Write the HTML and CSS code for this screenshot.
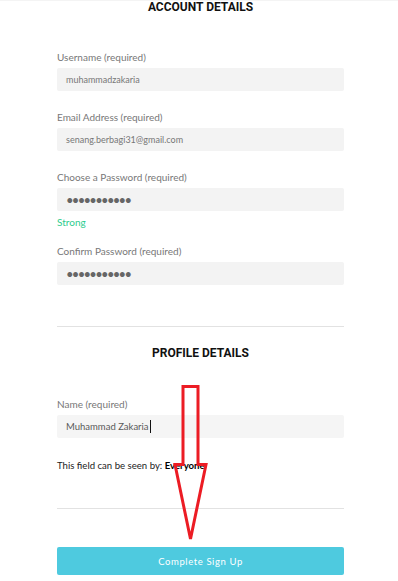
FILE: index.html
```html
<!DOCTYPE html>
<html lang="en">
<head>
<meta charset="utf-8">
<title>Sign Up</title>
<link rel="stylesheet" href="styles.css">
</head>
<body>
<div class="page">
  <form class="signup">
    <h2 class="section-title">ACCOUNT DETAILS</h2>

    <div class="field first">
      <label class="label">Username (required)</label>
      <div class="input">muhammadzakaria</div>
    </div>

    <div class="field">
      <label class="label">Email Address (required)</label>
      <div class="input">senang.berbagi31@gmail.com</div>
    </div>

    <div class="field">
      <label class="label">Choose a Password (required)</label>
      <div class="input dots">•••••••••••</div>
      <div class="strength">Strong</div>
    </div>

    <div class="field confirm">
      <label class="label">Confirm Password (required)</label>
      <div class="input dots">•••••••••••</div>
    </div>

    <hr class="divider first-divider">

    <h2 class="section-title">PROFILE DETAILS</h2>

    <div class="field name-field">
      <label class="label">Name (required)</label>
      <div class="input dark">Muhammad Zakaria<span class="caret"></span></div>
    </div>

    <p class="visibility">This field can be seen by: <strong>Everyone</strong></p>

    <hr class="divider second-divider">

    <button type="button" class="submit">Complete Sign Up</button>
  </form>

  <svg class="arrow" width="40" height="164" viewBox="172 382 40 164" aria-hidden="true">
    <polygon points="183,385.5 198,385.5 198,463.5 206,463.5 190.5,538 175,463.5 183,463.5" fill="none" stroke="#ec1c24" stroke-width="3" stroke-linejoin="miter"/>
  </svg>
</div>
</body>
</html>
```

FILE: styles.css
```css
html, body {
  margin: 0;
  padding: 0;
  background: #ffffff;
}

body {
  font-family: Lato, "Open Sans", sans-serif;
  color: #777;
}

.page {
  position: relative;
  width: 398px;
  height: 581px;
  overflow: hidden;
  border-top: 1px solid #f4f4f4;
  box-sizing: border-box;
}

.signup {
  display: flex;
  flex-direction: column;
  padding: 0 54px 0 57px;
  margin-top: -1px;
}

.section-title {
  margin: 0;
  font-family: Roboto, "Liberation Sans", sans-serif;
  font-weight: 700;
  font-size: 12px;
  line-height: 14px;
  color: #111;
  text-align: center;
}

.field {
  display: flex;
  flex-direction: column;
  margin-top: 20px;
}

.field.first {
  margin-top: 37px;
}

.label {
  display: block;
  font-size: 10px;
  line-height: 12px;
  color: #777;
  margin-bottom: 5px;
}

.input {
  height: 23px;
  box-sizing: border-box;
  background: #f3f3f3;
  border-radius: 2px;
  padding: 0 9px;
  display: flex;
  align-items: center;
  font-size: 9px;
  color: #777;
}

.input.dots {
  font-size: 13px;
  letter-spacing: -1.7px;
  color: #666;
  padding-top: 1px;
}

.input.dark {
  color: #5a5a5a;
  background: #f5f5f5;
  font-size: 9.5px;
}

.caret {
  display: inline-block;
  width: 1px;
  height: 13px;
  background: #111;
  margin-left: 1px;
}

.strength {
  margin-top: 5px;
  font-size: 10px;
  line-height: 13px;
  color: #2ecc8e;
}

.field.confirm {
  margin-top: 16px;
}

.divider {
  border: 0;
  height: 1px;
  background: #e2e2e2;
  margin: 41px 0 19px;
}

.second-divider {
  margin: 36px 0 38px;
}

.name-field {
  margin-top: 38px;
}

.visibility {
  margin: 22px 0 0;
  font-size: 9.6px;
  line-height: 12px;
  color: #222;
}

.visibility strong {
  color: #000;
}

.submit {
  height: 28px;
  border: 0;
  border-radius: 2px;
  background: #4ecadf;
  color: #fff;
  font-family: Lato, "Open Sans", sans-serif;
  font-size: 9.5px;
  letter-spacing: 0.6px;
  padding: 0;
  cursor: pointer;
}

.arrow {
  position: absolute;
  left: 172px;
  top: 382px;
}
```
